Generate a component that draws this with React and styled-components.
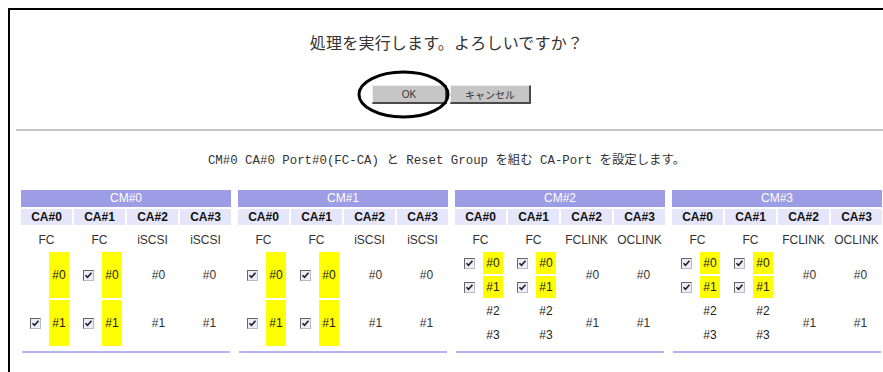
import React from 'react';
import styled, { createGlobalStyle } from 'styled-components';

const GlobalStyle = createGlobalStyle`
  html, body {
    margin: 0;
    padding: 0;
    background: #fff;
  }
  body {
    font-family: "Liberation Sans", "Noto Sans CJK JP", sans-serif;
    color: #333;
  }
`;

const groups = [
  {
    name: 'CM#0',
    types: ['FC', 'FC', 'iSCSI', 'iSCSI'],
    ports: [
      [{ label: '#0', hl: true, check: false }, { label: '#1', hl: true, check: true }],
      [{ label: '#0', hl: true, check: true }, { label: '#1', hl: true, check: true }]
    ],
    wide: true
  },
  {
    name: 'CM#1',
    types: ['FC', 'FC', 'iSCSI', 'iSCSI'],
    ports: [
      [{ label: '#0', hl: true, check: true }, { label: '#1', hl: true, check: true }],
      [{ label: '#0', hl: true, check: true }, { label: '#1', hl: true, check: true }]
    ],
    wide: true
  },
  {
    name: 'CM#2',
    types: ['FC', 'FC', 'FCLINK', 'OCLINK'],
    ports: [
      [
        { label: '#0', hl: true, check: true },
        { label: '#1', hl: true, check: true },
        { label: '#2' },
        { label: '#3' }
      ],
      [
        { label: '#0', hl: true, check: true },
        { label: '#1', hl: true, check: true },
        { label: '#2' },
        { label: '#3' }
      ]
    ]
  },
  {
    name: 'CM#3',
    types: ['FC', 'FC', 'FCLINK', 'OCLINK'],
    ports: [
      [
        { label: '#0', hl: true, check: true },
        { label: '#1', hl: true, check: true },
        { label: '#2' },
        { label: '#3' }
      ],
      [
        { label: '#0', hl: true, check: true },
        { label: '#1', hl: true, check: true },
        { label: '#2' },
        { label: '#3' }
      ]
    ]
  }
];

const CheckMark = () => (
  <CheckBox>
    <svg width="9" height="9" viewBox="0 0 9 9">
      <polyline points="1.5,4.2 3.5,6.3 7.5,1.8" fill="none" stroke="#222" strokeWidth="1.6" />
    </svg>
  </CheckBox>
);

const Group = ({ group }) => (
  <GroupBox>
    <GroupGrid>
      <CmHeader>{group.name}</CmHeader>
      {[0, 1, 2, 3].map(i => <CaHeader key={'ca' + i}>CA#{i}</CaHeader>)}
      {group.types.map((t, i) => <TypeCell key={'t' + i}>{t}</TypeCell>)}
      {group.ports.map((list, ci) => (
        <PortColumn key={'p' + ci}>
          {list.map(p => (
            <PortRow key={p.label} $short={!group.wide}>
              <CheckSlot>{p.check && <CheckMark />}</CheckSlot>
              <PortLabel $hl={p.hl}>{p.label}</PortLabel>
            </PortRow>
          ))}
        </PortColumn>
      ))}
      {[0, 1].map(ci => (
        <PortColumn key={'o' + ci}>
          <OtherPort $shift={ci === 0 ? 12 : 8}>#0</OtherPort>
          <OtherPort $shift={ci === 0 ? 12 : 8}>#1</OtherPort>
        </PortColumn>
      ))}
    </GroupGrid>
    <GroupLine />
  </GroupBox>
);

const App = () => (
  <>
    <GlobalStyle />
    <Frame>
      <Question>処理を実行します。よろしいですか？</Question>
      <ButtonRow>
        <OkWrap>
          <Button $w={75}>OK</Button>
          <Circle width="93" height="49" viewBox="0 0 93 49">
            <ellipse cx="46.5" cy="24.5" rx="44.5" ry="22.5" fill="none" stroke="#000" strokeWidth="3" />
          </Circle>
        </OkWrap>
        <Button $w={81}>キャンセル</Button>
      </ButtonRow>
      <Rule />
      <Notice>CM#0 CA#0 Port#0(FC-CA) と Reset Group を組む CA-Port を設定します。</Notice>
      <Groups>
        {groups.map(g => <Group key={g.name} group={g} />)}
      </Groups>
    </Frame>
  </>
);

const Frame = styled.div`
  margin: 8px 0 0 8px;
  min-height: 362px;
  border-top: 2px solid #000;
  border-left: 2px solid #000;
  display: flex;
  flex-direction: column;
`;

const Question = styled.div`
  margin-top: 22px;
  text-align: center;
  font-family: "Noto Sans CJK JP", sans-serif;
  font-size: 16px;
  line-height: 20px;
  color: #333;
  letter-spacing: 0.2px;
`;

const ButtonRow = styled.div`
  margin-top: 33px;
  display: flex;
  justify-content: center;
  gap: 3px;
  padding-left: 10px;
`;

const OkWrap = styled.div`
  position: relative;
  display: flex;
`;

const Button = styled.button`
  width: ${p => p.$w}px;
  height: 19px;
  padding: 0;
  background: #c6c6c6;
  border-top: 1px solid #ececec;
  border-left: 1px solid #ececec;
  border-right: 2px solid #4a4a4a;
  border-bottom: 2px solid #4a4a4a;
  font-family: "Liberation Sans", "Noto Sans CJK JP", sans-serif;
  font-size: 10px;
  color: #333;
`;

const Circle = styled.svg`
  position: absolute;
  left: -15px;
  top: -15px;
  pointer-events: none;
`;

const Rule = styled.div`
  margin: 25px 0 0 6px;
  height: 2px;
  background: #c4c4c4;
`;

const Notice = styled.div`
  margin-top: 22px;
  text-align: center;
  font-family: "Liberation Mono", "Noto Sans CJK JP", monospace;
  font-size: 12.4px;
  line-height: 16px;
  color: #333;
`;

const Groups = styled.div`
  margin-top: 21px;
  padding-left: 11px;
  display: flex;
  gap: 7px;
`;

const GroupBox = styled.div`
  width: 210px;
  display: flex;
  flex-direction: column;
`;

const GroupGrid = styled.div`
  display: grid;
  grid-template-columns: repeat(4, 51px);
  grid-template-rows: 17px 16px 23px 94px;
  gap: 2px;
`;

const CmHeader = styled.div`
  grid-column: 1 / span 4;
  background: #9d9de6;
  color: #fff;
  font-size: 12px;
  line-height: 17px;
  text-align: center;
`;

const CaHeader = styled.div`
  background: #e6e6fa;
  color: #111;
  font-weight: bold;
  font-size: 12px;
  line-height: 16px;
  text-align: center;
`;

const TypeCell = styled.div`
  font-size: 12px;
  line-height: 23px;
  text-align: center;
  color: #333;
  padding-top: 2px;
`;

const PortColumn = styled.div`
  display: flex;
  flex-direction: column;
  gap: 2px;
`;

const PortRow = styled.div`
  height: ${p => (p.$short ? 22 : 46)}px;
  display: flex;
  align-items: stretch;
  padding-left: 9px;
`;

const CheckSlot = styled.div`
  width: 19px;
  display: flex;
  align-items: center;
`;

const CheckBox = styled.span`
  width: 11px;
  height: 11px;
  box-sizing: border-box;
  border: 1px solid #666;
  border-right-color: #bbb;
  border-bottom-color: #bbb;
  background: #ececfa;
  display: flex;
  align-items: center;
  justify-content: center;
`;

const PortLabel = styled.div`
  width: 20px;
  background: ${p => (p.$hl ? '#ffff00' : 'transparent')};
  display: flex;
  align-items: center;
  justify-content: center;
  font-size: 12px;
  color: #222;
`;

const OtherPort = styled.div`
  flex: 1;
  display: flex;
  align-items: center;
  justify-content: center;
  padding-left: ${p => p.$shift}px;
  font-size: 12px;
  color: #333;
`;

const GroupLine = styled.div`
  margin: 5px 1px 0;
  height: 2px;
  background: #b4b4ee;
`;

export default App;
